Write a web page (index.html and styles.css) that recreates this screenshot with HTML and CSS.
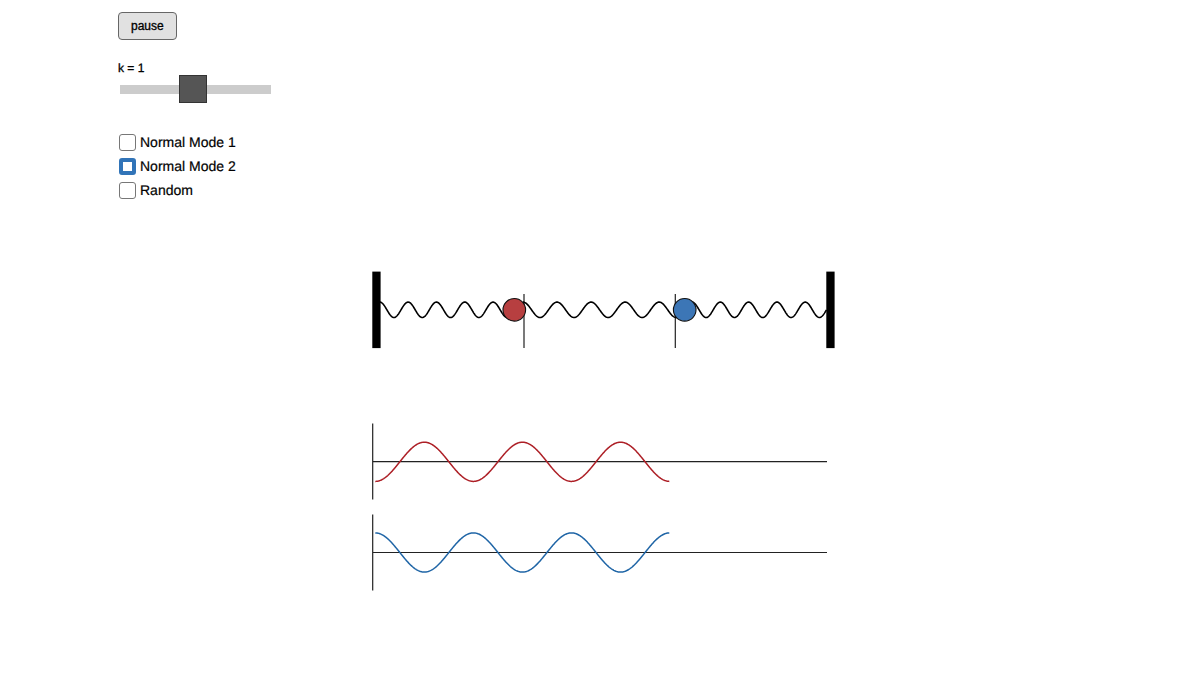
FILE: index.html
```html
<!DOCTYPE html>
<html lang="en">
<head>
<meta charset="utf-8">
<meta name="viewport" content="width=device-width, initial-scale=1">
<title>Coupled oscillators</title>
<link rel="stylesheet" href="styles.css">
</head>
<body>
<main class="page">
  <form class="controls">
    <button class="toggle" type="button">pause</button>
    <div class="field">
      <label class="field-label" for="k">k = 1</label>
      <input class="slider" id="k" type="range" min="0" max="2.1" step="0.1" value="1">
    </div>
    <div class="modes">
      <label class="mode"><input class="box" type="radio" name="mode">Normal Mode 1</label>
      <label class="mode"><input class="box" type="radio" name="mode" checked>Normal Mode 2</label>
      <label class="mode"><input class="box" type="radio" name="mode">Random</label>
    </div>
  </form>
  <svg class="stage" viewBox="364 271 472 320" role="img" aria-label="Two masses joined by springs, with their displacement over time">
    <g class="rest">
      <path d="M524 294V348M675.3 294V348"/>
    </g>
    <g class="springs">
      <path id="spring-left"/>
      <path id="spring-middle"/>
      <path id="spring-right"/>
    </g>
    <rect x="372.3" y="271.6" width="8.3" height="76.5"/>
    <rect x="826.3" y="271.6" width="8.3" height="76.5"/>
    <circle class="mass mass-red" cx="514.3" cy="309.8" r="11.3"/>
    <circle class="mass mass-blue" cx="684.7" cy="309.8" r="11.3"/>
    <g class="axes">
      <path d="M372.7 423.5V499.5M372.7 461.6H827M372.7 514.5V590.5M372.7 552.5H827"/>
    </g>
    <path class="trace trace-red" id="trace-red"/>
    <path class="trace trace-blue" id="trace-blue"/>
  </svg>
</main>
<script src="script.js"></script>
</body>
</html>
```
FILE: styles.css
```css
* {
  box-sizing: border-box;
}

body {
  margin: 0;
  background: #fff;
  color: #000;
  font-family: "Liberation Sans", Arial, sans-serif;
  text-rendering: geometricPrecision;
}

.page {
  display: flex;
  flex-direction: column;
  max-width: 964px;
  margin: 0 auto;
  padding: 12px 0 24px;
}

.controls {
  display: flex;
  flex-direction: column;
  align-items: flex-start;
}

.toggle {
  padding: 5px 12px;
  border: 1px solid #666;
  border-radius: 4px;
  background: #e1e1e1;
  color: #000;
  font: 12px/16px "Liberation Sans", Arial, sans-serif;
  -webkit-text-stroke: 0.3px #000;
}

.field {
  display: flex;
  flex-direction: column;
  margin-top: 22px;
}

.field-label {
  font-size: 12px;
  line-height: 13px;
  -webkit-text-stroke: 0.3px #000;
}

.slider {
  appearance: none;
  width: 151px;
  height: 28px;
  margin: 0 0 0 2px;
  background: linear-gradient(#ccc, #ccc) center / 100% 9px no-repeat;
}

.slider::-webkit-slider-thumb {
  appearance: none;
  width: 28px;
  height: 28px;
  border: 1px solid #333;
  background: #555;
}

.modes {
  display: flex;
  flex-direction: column;
  margin: 27px 0 0 1px;
}

.mode {
  display: flex;
  align-items: center;
  gap: 4px;
  font-size: 14px;
  line-height: 24px;
  -webkit-text-stroke: 0.2px #000;
}

.box {
  appearance: none;
  width: 17px;
  height: 17px;
  margin: 0;
  border: 1px solid #777;
  border-radius: 3px;
  background: #fff;
}

.box:checked {
  border: 4px solid #3174b8;
}

.stage {
  width: 100%;
  max-width: 472px;
  margin: 69px auto 0;
}

.rest,
.axes {
  fill: none;
  stroke: #222;
  stroke-width: 1.2;
}

.springs {
  fill: none;
  stroke: #000;
  stroke-width: 1.6;
}

.mass {
  stroke: #111;
  stroke-width: 1.1;
}

.mass-red {
  fill: #b73f40;
}

.mass-blue {
  fill: #3c76b6;
}

.trace {
  fill: none;
  stroke-width: 1.5;
}

.trace-red {
  stroke: #ad1f26;
}

.trace-blue {
  stroke: #1f65a6;
}
```
FILE: script.js
```js
// Draws a cosine from x0 to x1; a positive height starts the curve at a crest.
function wave(id, x0, x1, midY, height, turns) {
  const points = [];
  for (let x = x0; x <= x1; x += 0.5) {
    const phase = ((x - x0) / (x1 - x0)) * turns * 2 * Math.PI;
    points.push(x.toFixed(2) + " " + (midY - height * Math.cos(phase)).toFixed(2));
  }
  document.getElementById(id).setAttribute("d", "M" + points.join("L"));
}

wave("spring-left", 379.8, 514.3, 309.8, 7.7, 4.75);
wave("spring-middle", 523, 684.7, 309.8, 7.7, 4.75);
wave("spring-right", 692, 826.5, 309.8, 7.7, 4.75);
wave("trace-red", 375.3, 669.6, 461.8, -19.6, 3);
wave("trace-blue", 375.3, 669.6, 552.5, 19.6, 3);
```
